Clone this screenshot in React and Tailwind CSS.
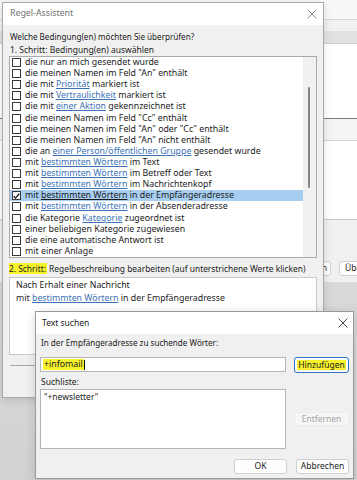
import React from "react";

const items = [
  ["die nur an mich gesendet wurde"],
  ['die meinen Namen im Feld "An" enthält'],
  ["die mit ", ["Priorität"], " markiert ist"],
  ["die mit ", ["Vertraulichkeit"], " markiert ist"],
  ["die mit ", ["einer Aktion"], " gekennzeichnet ist"],
  ['die meinen Namen im Feld "Cc" enthält'],
  ['die meinen Namen im Feld "An" oder "Cc" enthält'],
  ['die meinen Namen im Feld "An" nicht enthält'],
  ["die an ", ["einer Person/öffentlichen Gruppe"], " gesendet wurde"],
  ["mit ", ["bestimmten Wörtern"], " im Text"],
  ["mit ", ["bestimmten Wörtern"], " im Betreff oder Text"],
  ["mit ", ["bestimmten Wörtern"], " im Nachrichtenkopf"],
  ["mit ", ["bestimmten Wörtern"], " in der Empfängeradresse"],
  ["mit ", ["bestimmten Wörtern"], " in der Absenderadresse"],
  ["die Kategorie ", ["Kategorie"], " zugeordnet ist"],
  ["einer beliebigen Kategorie zugewiesen"],
  ["die eine automatische Antwort ist"],
  ["mit einer Anlage"],
];

function CloseX({ color }) {
  return (
    <svg width="10" height="10" viewBox="0 0 10 10">
      <path d="M0.5 0.5 L9.5 9.5 M9.5 0.5 L0.5 9.5" stroke={color} strokeWidth="0.9" fill="none" />
    </svg>
  );
}

function Check({ checked }) {
  return (
    <span className="w-[9px] h-[9px] border border-[#3a3a3a] bg-white shrink-0 flex items-center justify-center">
      {checked && (
        <svg width="8" height="8" viewBox="0 0 8 8">
          <path d="M0.8 4.3 L2.9 6.4 L7.2 1.4" stroke="#111" strokeWidth="1.5" fill="none" />
        </svg>
      )}
    </span>
  );
}

function Row({ parts, selected }) {
  return (
    <div
      className={
        "flex-1 flex items-center gap-[4px] pl-[2px] whitespace-nowrap " +
        (selected ? "bg-[#a7cdf0]" : "")
      }
    >
      <Check checked={selected} />
      <span className="text-[8.8px] leading-[11px] text-[#1b1b1b]">
        {parts.map((p, i) =>
          Array.isArray(p) ? (
            <span
              key={i}
              className={
                selected
                  ? "underline text-[#1b1b1b]"
                  : "underline text-[#3a72b8] decoration-[#3a72b8]"
              }
            >
              {p[0]}
            </span>
          ) : (
            <span key={i}>{p}</span>
          )
        )}
      </span>
    </div>
  );
}

function Btn({ children, className = "" }) {
  return (
    <div
      className={
        "h-[15px] flex items-center justify-center rounded-[3px] border border-[#d0d0d0] bg-[#fdfdfd] text-[8.5px] text-[#1b1b1b] " +
        className
      }
    >
      {children}
    </div>
  );
}

export default function App() {
  return (
    <div className="relative w-[357px] h-[480px] overflow-hidden bg-[#d8d8d8] font-['Noto_Sans',sans-serif] text-[#1b1b1b]">
      {/* background application window */}
      <div className="flex flex-col w-full h-full">
        <div className="h-[19px] bg-[#f8f8f8]" />
        <div className="h-[1px] bg-[#d6d6d6]" />
        <div className="h-[11px] bg-[#f1f1f1]" />
        <div className="h-[12px] bg-[#e1e1e1]" />
        <div className="h-[1px] bg-[#cfcfcf]" />
        <div className="h-[74px] bg-white" />
        <div className="h-[1px] bg-[#7c7c7c]" />
        <div className="h-[21px] bg-[#f4f4f4]" />
        <div className="h-[1px] bg-[#d4d4d4]" />
        <div className="h-[78px] bg-white" />
        <div className="h-[1px] bg-[#c9c9c9]" />
        <div className="h-[62px] bg-[#f0f0f0] flex items-start pt-[41px] pl-[312px] gap-[8px] overflow-hidden">
          <Btn className="w-[19px] shrink-0 justify-end pr-[3px]">n</Btn>
          <Btn className="w-[50px] shrink-0 justify-start pl-[5px]">Übernehmen</Btn>
        </div>
        <div className="flex-1 bg-gradient-to-b from-[#d9d9d9] to-[#d2d2d2]" />
      </div>

      {/* Regel-Assistent dialog */}
      <div className="absolute left-[2px] top-[2px] w-[322px] h-[396px] border border-[#a9a9a9] bg-[#f0f0f0] flex flex-col shadow-[0_2px_8px_rgba(0,0,0,0.12)]">
        <div className="h-[22px] shrink-0 bg-white flex items-center justify-between pl-[7px] pr-[6px]">
          <span className="text-[8.8px] text-[#727272]">Regel-Assistent</span>
          <CloseX color="#7a7a7a" />
        </div>
        <div className="flex flex-col px-[6px] pt-[5px]">
          <div className="pl-[1px] text-[8.1px] leading-[13px] whitespace-nowrap">
            Welche Bedingung(en) möchten Sie überprüfen?
          </div>
          <div className="pl-[1px] text-[8.5px] leading-[13px] whitespace-nowrap">
            1. Schritt: Bedingung(en) auswählen
          </div>
          <div className="h-[202px] border border-[#a9a9a9] bg-white flex">
            <div className="flex-1 flex flex-col">
              {items.map((parts, i) => (
                <Row key={i} parts={parts} selected={i === 12} />
              ))}
            </div>
            <div className="w-[13px] bg-[#f0f0f0] relative">
              <div className="absolute left-[5px] top-[30px] w-[2px] h-[101px] rounded-full bg-[#858585]" />
            </div>
          </div>
          <div className="mt-[4px] text-[8.4px] leading-[13px] whitespace-nowrap">
            <span className="bg-[#f7f22c] pr-[1px]">2. Schritt:</span>{" "}
            Regelbeschreibung bearbeiten (auf unterstrichene Werte klicken)
          </div>
          <div className="mt-[2px] h-[78px] border border-[#c9c9c9] bg-white pl-[6px] pt-[1px] text-[8.8px] leading-[13px]">
            <div>Nach Erhalt einer Nachricht</div>
            <div>
              mit <span className="underline text-[#3a72b8]">bestimmten Wörtern</span> in der Empfängeradresse
            </div>
          </div>
          <div className="mt-[10px] ml-[1px] h-[1px] bg-[#a8a8a8]" />
        </div>
      </div>

      {/* Text suchen dialog */}
      <div className="absolute left-[35px] top-[311px] w-[319px] h-[168px] border border-[#9a9a9a] bg-[#f0f0f0] flex flex-col shadow-[0_2px_10px_rgba(0,0,0,0.15)]">
        <div className="h-[22px] shrink-0 bg-white flex items-center justify-between pl-[6px] pr-[5px]">
          <span className="text-[8.5px] text-[#1b1b1b]">Text suchen</span>
          <CloseX color="#333" />
        </div>
        <div className="flex flex-col pl-[4px] pr-[4px] pt-[3px]">
          <div className="pl-[1px] text-[8.1px] leading-[12px] whitespace-nowrap">
            In der Empfängeradresse zu suchende Wörter:
          </div>
          <div className="mt-[8px] flex items-start gap-[8px]">
            <div className="w-[246px] h-[15px] border border-[#b5b5b5] bg-white flex items-center pl-[2px] text-[8.8px]">
              <span className="bg-[#f7f22c] px-[1px] leading-[11px]">+infomail</span>
              <span className="w-[1px] h-[10px] bg-[#111]" />
            </div>
            <div className="w-[55px] h-[16px] rounded-[3px] border-[1.5px] border-[#2a72c4] bg-[#fbfbfb] flex items-center justify-center text-[8.5px]">
              <span className="bg-[#f7f22c] px-[1px] leading-[10px]">Hinzufügen</span>
            </div>
          </div>
          <div className="mt-[3px] pl-[1px] text-[8.5px] leading-[12px]">Suchliste:</div>
          <div className="mt-[1px] flex items-center gap-[8px]">
            <div className="w-[246px] h-[60px] border border-[#b5b5b5] bg-white pl-[3px] pt-[1px] text-[8.5px] leading-[12px]">
              "+newsletter"
            </div>
            <div className="w-[55px] h-[14px] rounded-[3px] border border-[#ececec] bg-[#f6f6f6] flex items-center justify-center text-[8.5px] text-[#a3a3a3]">
              Entfernen
            </div>
          </div>
          <div className="mt-[10px] flex justify-end gap-[9px]">
            <Btn className="w-[53px]">OK</Btn>
            <Btn className="w-[53px]">Abbrechen</Btn>
          </div>
        </div>
      </div>
    </div>
  );
}
